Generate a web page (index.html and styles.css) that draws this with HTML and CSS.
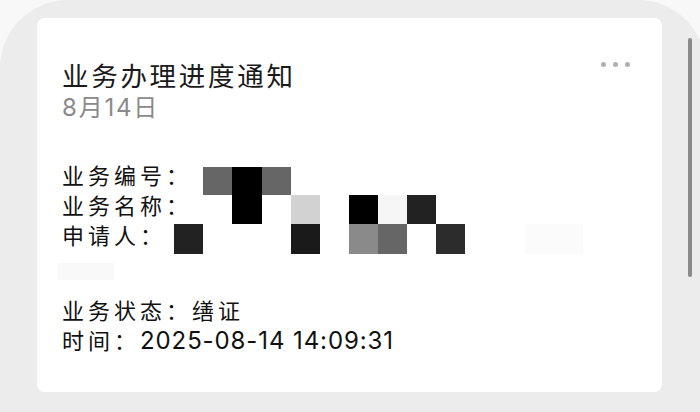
FILE: index.html
```html
<!DOCTYPE html>
<html lang="zh">
<head>
<meta charset="utf-8">
<link rel="stylesheet" href="styles.css">
</head>
<body>
<div class="screen">
  <div class="card">
    <div class="more"><span></span><span></span><span></span></div>
    <div class="title">业务办理进度通知</div>
    <div class="date">8月14日</div>
    <div class="group first">
      <div class="row"><span class="label">业务编号：</span></div>
      <div class="row"><span class="label">业务名称：</span></div>
      <div class="row"><span class="label">申请人：</span></div>
    </div>
    <div class="group second">
      <div class="row"><span class="label">业务状态：</span><span class="value">缮证</span></div>
      <div class="row"><span class="label">时间：</span><span class="num">2025-08-14 14:09:31</span></div>
    </div>
    <svg class="mosaic" viewBox="0 0 625 374" width="625" height="374">
      <rect x="21" y="245" width="56" height="17" fill="#f9f9f9"/>
      <rect x="488" y="206" width="58" height="30" fill="#fbfbfb"/>
      <rect x="166" y="149" width="30" height="28" fill="#666"/>
      <rect x="195" y="149" width="30" height="57" fill="#000"/>
      <rect x="225" y="149" width="29" height="28" fill="#666"/>
      <rect x="254" y="177" width="29" height="29" fill="#d2d2d2"/>
      <rect x="312" y="177" width="29" height="29" fill="#000"/>
      <rect x="341" y="177" width="29" height="29" fill="#f6f6f6"/>
      <rect x="370" y="177" width="29" height="29" fill="#222"/>
      <rect x="137" y="206" width="29" height="30" fill="#222"/>
      <rect x="254" y="206" width="29" height="30" fill="#1a1a1a"/>
      <rect x="312" y="206" width="29" height="30" fill="#8a8a8a"/>
      <rect x="341" y="206" width="29" height="30" fill="#666"/>
      <rect x="399" y="206" width="29" height="30" fill="#2c2c2c"/>
    </svg>
  </div>
  <div class="scrollbar"></div>
</div>
</body>
</html>
```
FILE: styles.css
```css
html, body {
  margin: 0;
  padding: 0;
  background: #f8f8f8;
  width: 700px;
  height: 412px;
  overflow: hidden;
}
.screen {
  width: 706px;
  height: 412px;
  background: #ececec;
  border-radius: 68px 68px 0 0;
  display: flex;
  align-items: flex-start;
  padding: 18px 0 0 37px;
  box-sizing: border-box;
}
.card {
  position: relative;
  width: 625px;
  height: 374px;
  background: #fff;
  border-radius: 8px;
  box-sizing: border-box;
  padding: 41px 0 0 25px;
  font-family: "Inter", "Noto Sans CJK SC", sans-serif;
  color: #111;
}
.title {
  font-size: 26.5px;
  line-height: 34px;
  letter-spacing: 2.7px;
  color: #1a1a1a;
}
.date {
  font-size: 24px;
  line-height: 30px;
  color: #8a8a8a;
  letter-spacing: 1.8px;
}
.group.first { margin-top: 38px; }
.group.second { margin-top: 45px; }
.row {
  font-size: 22px;
  line-height: 30px;
  height: 30px;
  white-space: nowrap;
}
.label, .value { letter-spacing: 4px; }
.num { font-size: 24px; letter-spacing: 0.9px; }
.more {
  position: absolute;
  top: 44px;
  right: 32px;
  display: flex;
  gap: 7px;
}
.more span {
  width: 5px;
  height: 5px;
  border-radius: 50%;
  background: #b0b0b0;
}
.mosaic {
  position: absolute;
  left: 0;
  top: 0;
}
.scrollbar {
  width: 4px;
  height: 239px;
  margin: 20px 0 0 26px;
  background: #8a8a8a;
  border-radius: 2px;
}
```
